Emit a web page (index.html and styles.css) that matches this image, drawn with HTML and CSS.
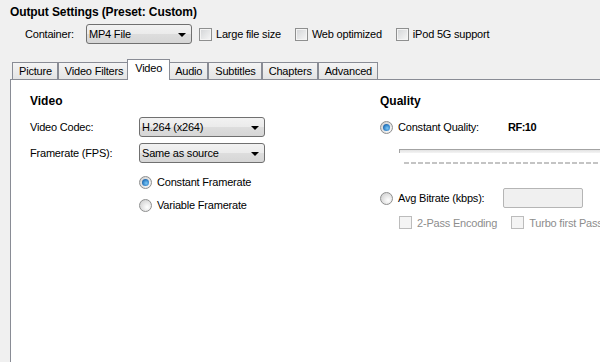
FILE: index.html
```html
<!DOCTYPE html>
<html lang="en">
<head>
    <meta charset="UTF-8">
    <title>Output Settings</title>
    <link rel="stylesheet" href="styles.css">
</head>
<body>
    <div class="window">
        <h1 class="title">Output Settings (Preset: Custom)</h1>

        <div class="output-row">
            <span class="container-label">Container:</span>
            <div class="combo combo-container"><span>MP4 File</span><i class="arrow"></i></div>
            <label class="check first"><span class="box"></span>Large file size</label>
            <label class="check"><span class="box"></span>Web optimized</label>
            <label class="check"><span class="box"></span>iPod 5G support</label>
        </div>

        <div class="tabs">
            <div class="tab">Picture</div>
            <div class="tab">Video Filters</div>
            <div class="tab active">Video</div>
            <div class="tab">Audio</div>
            <div class="tab">Subtitles</div>
            <div class="tab">Chapters</div>
            <div class="tab">Advanced</div>
        </div>

        <div class="panel">
            <div class="video-col">
                <h2 class="section">Video</h2>
                <div class="field">
                    <span class="field-label">Video Codec:</span>
                    <div class="combo combo-wide"><span>H.264 (x264)</span><i class="arrow"></i></div>
                </div>
                <div class="field second">
                    <span class="field-label">Framerate (FPS):</span>
                    <div class="combo combo-wide"><span>Same as source</span><i class="arrow"></i></div>
                </div>
                <label class="radio-row first"><span class="radio checked"></span>Constant Framerate</label>
                <label class="radio-row"><span class="radio"></span>Variable Framerate</label>
            </div>

            <div class="quality-col">
                <h2 class="section">Quality</h2>
                <div class="cq-row">
                    <span class="radio checked"></span>
                    <span class="cq-label">Constant Quality:</span>
                    <span class="rf-value">RF:10</span>
                </div>
                <div class="slider-track"></div>
                <div class="slider-ticks"></div>
                <div class="bitrate-row">
                    <span class="radio"></span>
                    <span class="bitrate-label">Avg Bitrate (kbps):</span>
                    <div class="text-input disabled"></div>
                </div>
                <div class="pass-row">
                    <label class="check disabled"><span class="box"></span>2-Pass Encoding</label>
                    <label class="check disabled turbo"><span class="box"></span>Turbo first Pass</label>
                </div>
            </div>
        </div>
    </div>
</body>
</html>
```

FILE: styles.css
```css
html, body {
    margin: 0;
    height: 100%;
}

body {
    background: #f0f0f0;
    font-family: "Liberation Sans", Arial, sans-serif;
    font-size: 11px;
    letter-spacing: -0.2px;
    color: #000;
    overflow: hidden;
}

.window {
    height: 362px;
    padding-top: 6px;
    box-sizing: border-box;
    display: flex;
    flex-direction: column;
}

.title {
    margin: 0 0 0 10px;
    font-size: 12px;
    line-height: 13px;
    font-weight: bold;
    letter-spacing: -0.1px;
}

/* container row */

.output-row {
    display: flex;
    align-items: center;
    height: 20px;
    margin: 5px 0 0 25px;
}

.container-label {
    width: 61px;
    flex: none;
}

.combo {
    height: 20px;
    box-sizing: border-box;
    border: 1px solid #707070;
    border-radius: 3px;
    background: linear-gradient(#f2f2f2 0%, #ebebeb 50%, #dddddd 51%, #d6d6d6 100%);
    display: flex;
    align-items: center;
    justify-content: space-between;
    padding: 0 5px 0 2px;
    flex: none;
}

.combo span {
    white-space: nowrap;
}

.combo .arrow {
    width: 0;
    height: 0;
    border-left: 4px solid transparent;
    border-right: 4px solid transparent;
    border-top: 4px solid #000;
    margin-top: 1px;
}

.combo-container {
    width: 106px;
}

.combo-wide {
    width: 126px;
}

.check {
    display: flex;
    align-items: center;
    gap: 4px;
    margin-left: 14px;
    white-space: nowrap;
}

.check.first {
    margin-left: 7px;
}

.box {
    width: 13px;
    height: 13px;
    box-sizing: border-box;
    border: 1px solid #8e8f8f;
    background: linear-gradient(135deg, #d2d4d6, #f7f7f7);
    box-shadow: inset 0 0 0 1px #f4f4f4;
    flex: none;
}

.check.disabled {
    color: #8d8d8d;
    gap: 5px;
}

.check.disabled .box {
    border-color: #bcbcbc;
    background: #f4f4f4;
    box-shadow: none;
}

/* tabs */

.tabs {
    display: flex;
    align-items: flex-end;
    height: 20px;
    margin: 15px 0 0 12px;
}

.tab {
    height: 16px;
    line-height: 16px;
    padding: 0 5px 0 6px;
    border: 1px solid #898c95;
    border-bottom: 0;
    background: linear-gradient(#f4f4f4, #e4e4e4);
    white-space: nowrap;
}

.tab.active {
    position: relative;
    z-index: 1;
    height: 20px;
    line-height: 17px;
    margin: 0 -2px -1px;
    padding: 0 7px;
    background: #fff;
}

/* panel */

.panel {
    flex: 1;
    margin-left: 10px;
    border-top: 1px solid #898c95;
    border-left: 1px solid #898c95;
    background: #fff;
    display: flex;
    padding: 14px 0 0 19px;
    overflow: hidden;
}

.section {
    margin: 0;
    font-size: 12px;
    line-height: 14px;
    font-weight: bold;
    letter-spacing: 0;
}

.video-col {
    width: 350px;
    flex: none;
}

.field {
    display: flex;
    align-items: center;
    height: 20px;
    margin-top: 9px;
}

.field.second {
    margin-top: 6px;
}

.field-label {
    width: 109px;
    flex: none;
}

.radio-row {
    display: flex;
    align-items: center;
    gap: 5px;
    height: 18px;
    margin: 5px 0 0 109px;
}

.radio-row.first {
    margin-top: 10px;
}

.radio {
    width: 13px;
    height: 13px;
    box-sizing: border-box;
    border: 1px solid #8e8f8f;
    border-radius: 50%;
    background: radial-gradient(circle at 65% 65%, #ffffff 0%, #e6e6e6 45%, #c9c9c9 100%);
    flex: none;
    display: flex;
    align-items: center;
    justify-content: center;
}

.radio.checked::after {
    content: "";
    width: 7px;
    height: 7px;
    border-radius: 50%;
    background: radial-gradient(circle at 60% 60%, #7cc8f5 0%, #2f7fc6 55%, #0d3e78 100%);
}

/* quality column */

.quality-col {
    width: 300px;
    flex: none;
}

.cq-row {
    display: flex;
    align-items: center;
    height: 20px;
    margin-top: 9px;
}

.cq-label {
    width: 110px;
    margin-left: 5px;
    flex: none;
}

.rf-value {
    font-weight: bold;
    letter-spacing: -0.5px;
}

.slider-track {
    height: 3px;
    margin: 12px 0 0 19px;
    border-top: 1px solid #a3a3a3;
    border-left: 1px solid #a3a3a3;
    background: linear-gradient(#e3e3e3, #f4f4f4);
}

.slider-ticks {
    height: 2px;
    margin: 9px 0 0 24px;
    background: repeating-linear-gradient(90deg, #c4c4c4 0, #c4c4c4 5px, transparent 5px, transparent 7px);
}

.bitrate-row {
    display: flex;
    align-items: center;
    height: 20px;
    margin-top: 24px;
}

.bitrate-label {
    width: 105px;
    margin-left: 5px;
    flex: none;
}

.text-input {
    width: 80px;
    height: 20px;
    box-sizing: border-box;
    border: 1px solid #b5b5b5;
    border-radius: 2px;
    background: #f0f0f0;
}

.pass-row {
    display: flex;
    align-items: center;
    height: 17px;
    margin: 6px 0 0 19px;
}

.pass-row .check {
    margin-left: 0;
}

.pass-row .turbo {
    margin-left: 14px;
}
```
